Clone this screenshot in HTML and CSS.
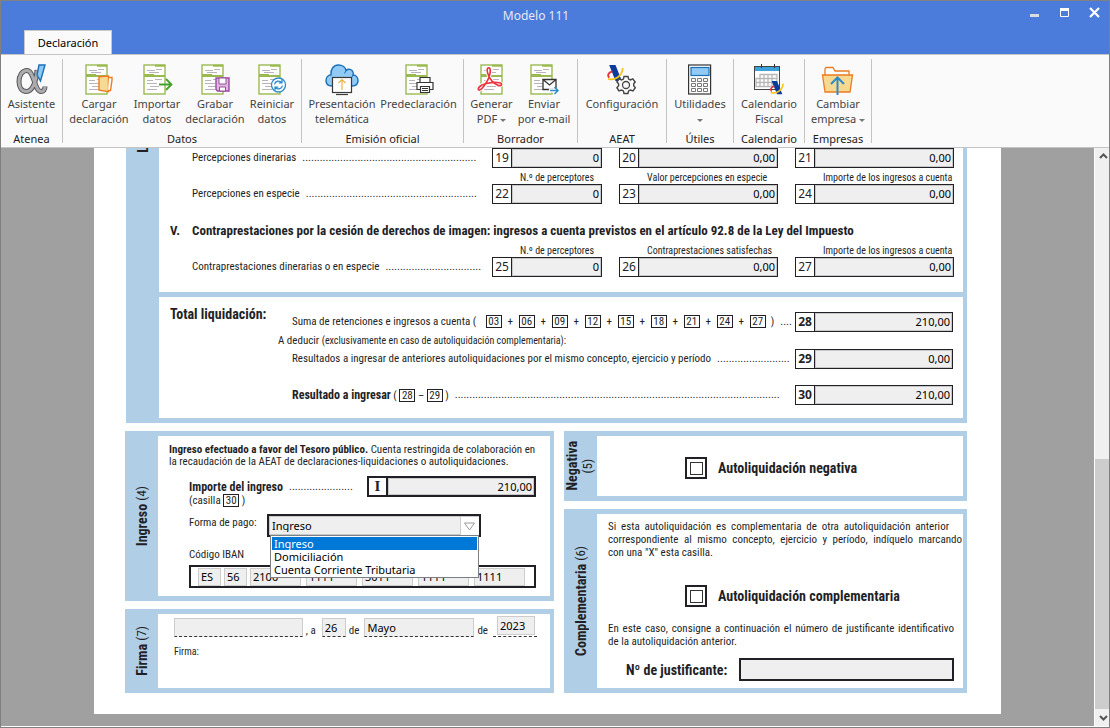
FILE: index.html
```html
<!DOCTYPE html>
<html lang="es">
<head>
<meta charset="utf-8">
<title>Modelo 111</title>
<link rel="stylesheet" href="styles.css">
</head>
<body>
<svg class="defs" aria-hidden="true">
  <symbol id="doc" viewBox="0 0 24 32">
    <rect x="1" y="1" width="21" height="29" fill="#fff" stroke="#9aba50" stroke-width="1.4"/>
    <path d="M12 1.700h10M1 11h10M1 12h21" stroke="#9aba50" stroke-width="2"/>
    <path d="M4 6.500h8M13 5.500h6M6 8.500h10M4 16.500h6M12 15.500h7M4 19.500h10M7 22.500h9M4 25.500h10" stroke="#b9b3bb"/>
  </symbol>
  <symbol id="aeat" viewBox="0 0 18 18">
    <path d="M3 1h6l6 15H9z" fill="#0b3c9c"/>
    <path d="M6 7c-4 1-5 4-3 6" fill="none" stroke="#e5303b" stroke-width="1.8"/>
    <path d="M2 14c6 2 13-2 14-10" fill="none" stroke="#f8c51c" stroke-width="1.8"/>
  </symbol>
</svg>

<div class="window">
  <header class="titlebar">
    <h1 class="title">Modelo 111</h1>
    <div class="controls">
      <button class="control" aria-label="Minimizar"><svg width="11" height="11"><path d="M1 8.500h9" stroke="#dcdcdc" stroke-width="3"/></svg></button>
      <button class="control" aria-label="Maximizar"><svg width="11" height="11"><path d="M1.500 2v7.500h8V2" fill="none" stroke="#fff"/><path d="M1 2.500h9" stroke="#fff" stroke-width="3"/></svg></button>
      <button class="control" aria-label="Cerrar"><svg width="11" height="11"><path d="M1 1l9 9M10 1l-9 9" stroke="#fff" stroke-width="2.200"/></svg></button>
    </div>
    <nav class="tabs"><button class="tab">Declaración</button></nav>
  </header>

  <div class="ribbon">
    <section class="group">
      <div class="tools">
        <button class="tool"><svg class="icon" viewBox="0 0 34 32" width="34" height="32"><path d="M22 6C21 19 17 27.500 11.500 27.500 6.500 27.500 4 23 4 17.500S7 6.500 12 6.500C19 6.500 19.500 27.500 26 27.500c2.500 0 4-2 4-5" fill="none" stroke="#58585a" stroke-width="5"/><path d="M22 6.500C21 19 17 27.500 11.500 27.500 6.500 27.500 4 23 4 17.500S7 6.500 12 6.500C19 6.500 19.500 27.500 26 27.500c2.500 0 4-2 4-4.500" fill="none" stroke="#acacae" stroke-width="3"/><path d="M24 1h6l-4.500 16-3.500-6z" fill="#8cc8f2" stroke="#1c6fb5" stroke-width="1.400"/></svg><span>Asistente<br>virtual</span></button>
      </div>
      <h2 class="group-name">Atenea</h2>
    </section>
    <section class="group">
      <div class="tools tools-data">
        <button class="tool"><svg class="icon" viewBox="0 0 34 32" width="34" height="32"><use href="#doc" x="3" y="0" width="24" height="32"/><path d="M17 12.700l9.500-.7v15.600l-9.500-1.400z" fill="#f6da92" stroke="#ea7c22" stroke-width="1.400"/><path d="M27 13.500h3v2.500l-1.500 10.500H26" fill="#fff" stroke="#ea7c22" stroke-width="1.400"/></svg><span>Cargar<br>declaración</span></button>
        <button class="tool"><svg class="icon" viewBox="0 0 34 32" width="34" height="32"><use href="#doc" x="3" y="0" width="24" height="32"/><path d="M19 20.500h12M26 15l5.500 5.500-5.500 5.500" fill="none" stroke="#44a12c" stroke-width="1.800"/></svg><span>Importar<br>datos</span></button>
        <button class="tool"><svg class="icon" viewBox="0 0 34 32" width="34" height="32"><use href="#doc" x="3" y="0" width="24" height="32"/><path d="M18 14h13v13H19.500L18 25.500z" fill="#ddb9df" stroke="#9c4a9f" stroke-width="1.400"/><path d="M21 14h7v6h-7zM21.500 23h6v4h-6z" fill="#fff" stroke="#9c4a9f"/></svg><span>Grabar<br>declaración</span></button>
        <button class="tool"><svg class="icon" viewBox="0 0 34 32" width="34" height="32"><use href="#doc" x="3" y="0" width="24" height="32"/><circle cx="23.500" cy="21" r="7" fill="#fff" stroke="#2c8cc9" stroke-width="1.300"/><path d="M19.500 20.500c.5-3.500 5-4.500 7-2M27.500 21.500c-.5 3.500-5 4.500-7 2M27 15.500v3.300h-3.300M20 26.500v-3.300h3.300" fill="none" stroke="#2c8cc9" stroke-width="1.300"/></svg><span>Reiniciar<br>datos</span></button>
      </div>
      <h2 class="group-name">Datos</h2>
    </section>
    <section class="group">
      <div class="tools tools-filing">
        <button class="tool"><svg class="icon" viewBox="0 0 34 32" width="34" height="32"><path d="M7 22C3 22 1 19.500 1 16.500S3 11 6 10.700C5.500 5 8.500 1 13.500 1c4 0 7 2.500 7.600 5.500C23 4.500 27 5 28 8c.4 1 .4 2 0 3 3 0 5 2.500 5 5.500s-2 5.500-6 5.500z" fill="#90caf5" stroke="#1c6fb5" stroke-width="1.400"/><path d="M21 6.500l-1.500 3M28 11c-.5 2-2 3-3.500 3.200" fill="none" stroke="#1c6fb5"/><rect x="7.500" y="13.500" width="19" height="15" fill="#fff" stroke="#3a3a3a" stroke-width="1.200"/><path d="M11 30.500h12" stroke="#3a3a3a" stroke-width="1.200"/><path d="M17 26V15.500M13.500 19l3.500-3.500 3.500 3.500" fill="none" stroke="#eeb044" stroke-width="1.200"/></svg><span>Presentación<br>telemática</span></button>
        <button class="tool"><svg class="icon" viewBox="0 0 34 32" width="34" height="32"><use href="#doc" x="3" y="0" width="24" height="32"/><path d="M18 18.500v-5h10v5M18 25.500h-3v-7h16v7h-3" fill="#fff" stroke="#333" stroke-width="1.200"/><path d="M18.500 22.500h9v6h-9z" fill="#fff" stroke="#333" stroke-width="1.200"/><path d="M20 24.500h6M20 26.500h6" stroke="#333"/></svg><span>Predeclaración</span></button>
      </div>
      <h2 class="group-name">Emisión oficial</h2>
    </section>
    <section class="group">
      <div class="tools tools-draft">
        <button class="tool"><svg class="icon" viewBox="0 0 34 32" width="34" height="32"><use href="#doc" x="5" y="0" width="24" height="32"/><path d="M13 4c3-1.500 3 5 .5 10.500S6 26.500 4 26s0-5 7.500-6.500S27 18 26.500 20.500 21 21.500 17 17 11 5.500 13 4z" fill="none" stroke="#fff" stroke-width="3.500"/><path d="M13 4c3-1.500 3 5 .5 10.500S6 26.500 4 26s0-5 7.500-6.500S27 18 26.500 20.500 21 21.500 17 17 11 5.500 13 4z" fill="none" stroke="#ee3440" stroke-width="1.700"/></svg><span>Generar<br>PDF <i class="caret"></i></span></button>
        <button class="tool"><svg class="icon" viewBox="0 0 34 32" width="34" height="32"><use href="#doc" x="3" y="0" width="24" height="32"/><path d="M16 15.500h13v10H16z" fill="#fff" stroke="#333" stroke-width="1.300"/><path d="M16 15.500l6.500 5.500 6.500-5.500" fill="none" stroke="#333" stroke-width="1.300"/><path d="M22 26.500h9" stroke="#fff" stroke-width="4"/><path d="M23 26.500h8M27.500 23l3.500 3.500-3.500 3.500" fill="none" stroke="#2c8cc9" stroke-width="1.500"/></svg><span>Enviar<br>por e-mail</span></button>
      </div>
      <h2 class="group-name">Borrador</h2>
    </section>
    <section class="group group-wide">
      <div class="tools">
        <button class="tool"><svg class="icon" viewBox="0 0 34 32" width="34" height="32"><use href="#aeat" x="1" y="0" width="19" height="19"/><path d="M19 12.500h4l.6 2.600 1.800.9 2.400-1.200 2.400 3.200-1.500 1.800v2l1.600 1.900-2.300 3.300-2.500-1-1.900 1-.6 2.500h-4l-.6-2.500-1.900-1-2.500 1-2.100-3.300 1.700-1.900v-2l-1.700-1.800 2.200-3.200 2.500 1.200 1.800-.9z" fill="#fafafa" stroke="#444" stroke-width="1.400"/><circle cx="21" cy="21" r="3.500" fill="#fafafa" stroke="#444" stroke-width="1.300"/></svg><span>Configuración</span></button>
      </div>
      <h2 class="group-name">AEAT</h2>
    </section>
    <section class="group group-small">
      <div class="tools">
        <button class="tool"><svg class="icon" viewBox="0 0 34 32" width="34" height="32"><rect x="5.600" y="1" width="22" height="29" fill="#fff" stroke="#333" stroke-width="1.200"/><rect x="8" y="3.500" width="18" height="8" fill="#90caf5" stroke="#1c6fb5" stroke-width="1.200"/><path d="M8.500 14.500h4v3h-4zM14.500 14.500h4v3h-4zM20.500 14.500h4v3h-4zM8.500 19.500h4v3h-4zM14.500 19.500h4v3h-4zM20.500 19.500h4v3h-4zM8.500 24.500h4v3h-4zM14.500 24.500h4v3h-4zM20.500 24.500h4v3h-4z" fill="#fff" stroke="#777"/></svg><span>Utilidades<br><i class="caret"></i></span></button>
      </div>
      <h2 class="group-name">Útiles</h2>
    </section>
    <section class="group group-medium">
      <div class="tools">
        <button class="tool"><svg class="icon" viewBox="0 0 34 32" width="34" height="32"><rect x="2.500" y="2.500" width="25" height="23" fill="#fff" stroke="#444"/><rect x="3" y="3" width="24" height="4" fill="#3ba1da"/><path d="M9.500 0v4M22.500 0v4" stroke="#333"/><path d="M8 10.500h17v12H4v-8h4zM8 10v13M12 10v13M16 10v13M20 10v13M4 14.500h21M4 18.500h21" fill="none" stroke="#b8b8b8" stroke-width="1.300"/><use href="#aeat" x="17" y="16" width="16" height="16"/></svg><span>Calendario<br>Fiscal</span></button>
      </div>
      <h2 class="group-name">Calendario</h2>
    </section>
    <section class="group group-small">
      <div class="tools">
        <button class="tool"><svg class="icon" viewBox="0 0 34 32" width="34" height="32"><path d="M4 13V5l1-1.500h7L14 7h14v6" fill="#fff" stroke="#ea7c22" stroke-width="1.300"/><path d="M1.500 11h30l-2.500 17H4z" fill="#f6da92" stroke="#ea7c22" stroke-width="1.300"/><path d="M16.500 31V14M10 20l6.500-6.500L23 20" fill="none" stroke="#2c8cc9" stroke-width="2"/></svg><span>Cambiar<br>empresa <i class="caret"></i></span></button>
      </div>
      <h2 class="group-name">Empresas</h2>
    </section>
  </div>

  <div class="viewer">
    <main class="canvas">
      <form class="sheet">
        <section class="panel panel-main">
          <div class="side"><span class="side-text side-above">Liquidación <small>(3)</small></span></div>
          <div class="panel-parts">
            <div class="part part-income">
              <div class="entry">
                <div class="leader"><span>Percepciones dinerarias</span><span class="dots">............................................................</span></div>
                <label class="field"><span class="code">19</span><input class="value" value="0"></label>
                <label class="field"><span class="code">20</span><input class="value" value="0,00"></label>
                <label class="field"><span class="code">21</span><input class="value" value="0,00"></label>
              </div>
              <div class="entry captions"><span></span><span>N.º de perceptores</span><span>Valor percepciones en especie</span><span>Importe de los ingresos a cuenta</span></div>
              <div class="entry">
                <div class="leader"><span>Percepciones en especie</span><span class="dots">...........................................................</span></div>
                <label class="field"><span class="code">22</span><input class="value" value="0"></label>
                <label class="field"><span class="code">23</span><input class="value" value="0,00"></label>
                <label class="field"><span class="code">24</span><input class="value" value="0,00"></label>
              </div>
              <h3 class="heading"><span class="numeral">V.</span>Contraprestaciones por la cesión de derechos de imagen: ingresos a cuenta previstos en el artículo 92.8 de la Ley del Impuesto</h3>
              <div class="entry captions"><span></span><span>N.º de perceptores</span><span>Contraprestaciones satisfechas</span><span>Importe de los ingresos a cuenta</span></div>
              <div class="entry">
                <div class="leader"><span>Contraprestaciones dinerarias o en especie</span><span class="dots">.................................</span></div>
                <label class="field"><span class="code">25</span><input class="value" value="0"></label>
                <label class="field"><span class="code">26</span><input class="value" value="0,00"></label>
                <label class="field"><span class="code">27</span><input class="value" value="0,00"></label>
              </div>
            </div>
            <div class="part part-total">
              <h3 class="total-name">Total liquidación:</h3>
              <div class="totals">
                <div class="total-row">
                  <div class="leader"><span class="sum">Suma de retenciones e ingresos a cuenta ( <b class="ref">03</b><i>+</i><b class="ref">06</b><i>+</i><b class="ref">09</b><i>+</i><b class="ref">12</b><i>+</i><b class="ref">15</b><i>+</i><b class="ref">18</b><i>+</i><b class="ref">21</b><i>+</i><b class="ref">24</b><i>+</i><b class="ref">27</b> &nbsp;)</span><span class="dots">....</span></div>
                  <label class="field"><span class="code strong">28</span><input class="value" value="210,00"></label>
                </div>
                <p class="deduct">A deducir <small>(exclusivamente en caso de autoliquidación complementaria):</small></p>
                <div class="total-row">
                  <div class="leader"><span>Resultados a ingresar de anteriores autoliquidaciones por el mismo concepto, ejercicio y período</span><span class="dots">.........................</span></div>
                  <label class="field"><span class="code strong">29</span><input class="value" value="0,00"></label>
                </div>
                <div class="total-row total-last">
                  <div class="leader"><span><strong>Resultado a ingresar</strong> ( <b class="ref">28</b> – <b class="ref">29</b> )</span><span class="dots">................................................................................................................</span></div>
                  <label class="field"><span class="code strong">30</span><input class="value" value="210,00"></label>
                </div>
              </div>
            </div>
          </div>
        </section>

        <div class="columns">
          <div class="stack">
            <section class="panel panel-payment">
              <div class="side"><span class="side-text">Ingreso <small>(4)</small></span></div>
              <div class="part part-payment">
                <p class="note"><strong>Ingreso efectuado a favor del Tesoro público.</strong> Cuenta restringida de colaboración en la recaudación de la AEAT de declaraciones-liquidaciones o autoliquidaciones.</p>
                <div class="payment-rows">
                  <div class="amount">
                    <div class="leader"><strong>Importe del ingreso</strong><span class="dots">......................</span></div>
                    <label class="field field-thick"><span class="code initial">I</span><input class="value" value="210,00"></label>
                  </div>
                  <p class="box-ref">(casilla <b class="ref">30</b> )</p>
                  <div class="method">
                    <label for="method">Forma de pago:</label>
                    <div class="combo">
                      <select id="method" class="select"><option>Ingreso</option><option>Domiciliación</option><option>Cuenta Corriente Tributaria</option></select>
                      <svg class="combo-arrow" width="19" height="18" viewBox="0 0 19 18"><path d="M.5 0v18" stroke="#ccc"/><path d="M4.500 6h10l-5 7z" fill="#fff" stroke="#999"/></svg>
                      <ul class="options"><li class="option option-on">Ingreso</li><li class="option">Domiciliación</li><li class="option">Cuenta Corriente Tributaria</li></ul>
                    </div>
                  </div>
                  <p class="iban-name">Código IBAN</p>
                  <div class="iban">
                    <input class="cell cell-xs" value="ES" aria-label="País"><input class="cell cell-xs" value="56" aria-label="Control"><input class="cell" value="2100" aria-label="Entidad"><input class="cell" value="1111" aria-label="Oficina"><input class="cell" value="3011" aria-label="Cuenta 1"><input class="cell" value="1111" aria-label="Cuenta 2"><input class="cell" value="1111" aria-label="Cuenta 3">
                  </div>
                </div>
              </div>
            </section>
            <section class="panel panel-sign">
              <div class="side"><span class="side-text">Firma <small>(7)</small></span></div>
              <div class="part part-sign">
                <div class="date">
                  <input class="cell place" aria-label="Lugar"><span>, a</span>
                  <input class="cell day" value="26" aria-label="Día"><span>de</span>
                  <input class="cell month" value="Mayo" aria-label="Mes"><span>de</span>
                  <span class="year-line"><input class="cell year" value="2023" aria-label="Año"></span>
                </div>
                <p class="sign">Firma:</p>
              </div>
            </section>
          </div>
          <div class="stack">
            <section class="panel panel-negative">
              <div class="side"><span class="side-text">Negativa<br><small>(5)</small></span></div>
              <div class="part part-negative">
                <label class="check"><span class="check-frame"><input class="check-box" type="checkbox"></span>Autoliquidación negativa</label>
              </div>
            </section>
            <section class="panel panel-extra">
              <div class="side"><span class="side-text">Complementaria <small>(6)</small></span></div>
              <div class="part part-extra">
                <p class="text"><span class="line line-short">Si esta autoliquidación es complementaria de otra autoliquidación anterior</span> <span class="line">correspondiente al mismo concepto, ejercicio y período, indíquelo marcando</span> con una "X" esta casilla.</p>
                <label class="check"><span class="check-frame"><input class="check-box" type="checkbox"></span>Autoliquidación complementaria</label>
                <p class="text"><span class="line line-mid">En este caso, consigne a continuación el número de justificante identificativo</span> de la autoliquidación anterior.</p>
                <div class="proof"><label for="proof">Nº de justificante:</label><input id="proof" class="proof-value"></div>
              </div>
            </section>
          </div>
        </div>
      </form>
    </main>
    <div class="scroll" aria-hidden="true">
      <svg class="scroll-end" width="16" height="17" viewBox="0 0 16 17"><path d="M5 10l3.500-3.500L12 10" fill="none" stroke="#555" stroke-width="2"/></svg>
      <div class="scroll-track"><div class="scroll-thumb"></div></div>
      <svg class="scroll-end" width="16" height="17" viewBox="0 0 16 17"><path d="M5 7l3.500 3.500L12 7" fill="none" stroke="#555" stroke-width="2"/></svg>
    </div>
  </div>
</div>
</body>
</html>
```

FILE: styles.css
```css
* { box-sizing: border-box; }
body, h1, h2, h3, p, ul { margin: 0; padding: 0; }
body {
  --ui: "Noto Sans", "Open Sans", sans-serif;
  --print: "Roboto Condensed", Roboto, sans-serif;
  --ink: #231f26;
  --blue: #b0cfe6;
  font: 12px/15px var(--ui);
  color: #000;
}
button, input, select { font: inherit; color: inherit; margin: 0; border-radius: 0; }
button { background: none; border: 0; padding: 0; }
.defs { position: absolute; width: 0; height: 0; }

.window {
  display: flex;
  flex-direction: column;
  height: 100vh;
  border: 1px solid #808080;
  background: #fff;
}

/* Title bar */
.titlebar {
  display: grid;
  grid-template-columns: 80px 1fr 80px;
  grid-template-rows: 29px 24px;
  background: #4b7bdb;
}
.title { grid-column: 2; text-align: center; font-size: 12px; line-height: 30px; font-weight: 400; color: #e4e9f5; padding-right: 38px; }
.controls { display: flex; justify-content: flex-end; gap: 19px; padding: 6px 9px 0 0; margin-left: -20px; }
.control { display: flex; width: 11px; height: 11px; }
.tabs { grid-row: 2; grid-column: 1 / -1; padding-left: 23px; display: flex; }
.tab { width: 88px; background: #fafafa; border: 1px solid #c8c8c8; border-bottom: 0; font-size: 11px; }

/* Ribbon */
.ribbon {
  display: flex;
  padding: 4px 0;
  background: #fafafa;
  border-top: 1px solid #c4c4c4;
  border-bottom: 1px solid #c4c4c4;
}
.group { display: flex; flex-direction: column; min-width: 62px; padding-top: 5px; border-right: 1px solid #c4c4c4; }
.group-small { width: 67px; }
.group-medium { width: 71px; }
.group-wide { width: 89px; }
.tools { display: grid; flex: 1; justify-content: center; }
.tools-data { grid-template-columns: 62px 54px 62px 52px; padding: 0 3px 0 5px; }
.tools-filing { grid-template-columns: 72px 81px; padding: 0 4px; }
.tools-draft { grid-template-columns: 47px 58px; padding: 0 4px; }
.tool { display: flex; flex-direction: column; align-items: center; color: #444; font-size: 11px; white-space: nowrap; }
.icon { flex: none; }
.group-name { height: 17px; font-size: 11px; line-height: 25px; font-weight: 400; text-align: center; color: #222; }
.caret { display: inline-block; vertical-align: middle; border: 3px solid transparent; border-top-color: #777; border-bottom: 0; }

/* Document viewer */
.viewer { flex: 1; min-height: 0; display: flex; border-bottom: 1px solid #fff; }
.canvas { flex: 1; overflow: hidden; background: #a0a0a0; }
.scroll { display: flex; flex-direction: column; width: 15px; border-left: 1px solid #fff; background: #f0f0f0; }
.scroll-end { flex: none; }
.scroll-track { flex: 1; display: flex; align-items: flex-end; }
.scroll-thumb { width: 100%; height: 46%; background: #cdcdcd; }

.sheet {
  max-width: 907px;
  margin: 0 auto;
  padding: 0 34px 21px 31px;
  background: #fff;
  color: var(--ink);
  font: 11px/14px var(--print);
}

/* Panels */
.panel { display: flex; background: var(--blue); padding: 5px 4px 5px 0; }
.panel-main { padding-top: 0; margin-left: 1px; }
.panel-parts { flex: 1; display: flex; flex-direction: column; gap: 5px; }
.side { position: relative; width: 33px; flex: none; display: flex; align-items: center; justify-content: center; }
.side-text { writing-mode: vertical-rl; transform: rotate(180deg); white-space: nowrap; text-align: center; font-size: 14px; line-height: 15px; font-weight: 700; }
.side-text small { font-size: 13px; font-weight: 400; }
.side-above { position: absolute; bottom: calc(100% - 5px); }
.part { flex: 1; background: #fff; min-width: 0; }

/* Numbered fields */
.field { display: flex; height: 20px; border: 1px solid var(--ink); background: #fff; font-family: var(--ui); }
.field-thick { height: 21px; border-width: 2px; }
.code { width: 19px; flex: none; text-align: center; line-height: 18px; font-size: 12px; border-right: 1px solid var(--ink); }
.strong { font-weight: 700; }
.initial { border-right-width: 2px; font: 700 15px/17px "Liberation Serif", serif; }
.value { flex: 1; min-width: 0; width: 0; border: 1px solid #c8c8c8; background: #efefef; padding: 0 1px; font-size: 11px; color: #000; text-align: right; }
.leader { display: flex; gap: 6px; min-width: 0; white-space: nowrap; align-items: center; }
.leader strong { font-size: 12px; }
.dots { flex: 1; min-width: 0; }

/* Income entries */
.part-income { padding: 0 9px 15px 33px; }
.entry { display: grid; grid-template-columns: 1fr 110px 159px 159px; column-gap: 17px; }
.entry .leader { margin-right: -10px; }
.captions { font-size: 10px; line-height: 12px; margin: 4px 0 0; }
.captions span { white-space: nowrap; padding-left: 28px; }
.heading { display: flex; margin: 20px 0 7px -22px; font-size: 13px; line-height: 14px; white-space: nowrap; }
.numeral { width: 22px; }

/* Totals */
.part-total { display: grid; grid-template-columns: 108px 1fr; padding: 9px 10px 13px 11px; }
.total-name { font-size: 14px; line-height: 16px; white-space: nowrap; }
.totals { padding-top: 6px; }
.total-row { display: grid; grid-template-columns: 1fr 158px; padding-left: 14px; }
.total-last { margin-top: 16px; }
.total-row .leader { padding-right: 2px; }
.ref { display: inline-block; width: 16px; height: 13px; border: 1px solid var(--ink); font-weight: 400; font-size: 11px; line-height: 12px; text-align: center; }
.sum i { display: inline-block; width: 17px; text-align: center; font-style: normal; }
.sum .ref:first-of-type { margin-left: 7px; }
.deduct { margin: 2px 0 1px; }
.deduct small { font-size: 10px; }

/* Lower columns */
.columns { display: grid; grid-template-columns: 429fr 403fr; gap: 10px; margin-top: 8px; }
.stack { display: flex; flex-direction: column; gap: 8px; min-width: 0; }

.part-payment { padding: 8px 8px 8px 11px; }
.note { font-size: 11px; line-height: 12px; }
.payment-rows { padding: 8px 6px 0 20px; }
.amount { display: grid; grid-template-columns: 1fr 169px; gap: 10px; }
.box-ref { line-height: 14px; margin-top: -3px; }
.method { display: grid; grid-template-columns: 71px 214px; gap: 7px; margin-top: 6px; }
.method label { line-height: 18px; }
.combo { position: relative; border: 2px solid var(--ink); font: 11px/13px var(--ui); color: #000; }
.select { display: block; appearance: none; width: 100%; height: 19px; border: 1px solid #c8c8c8; background: #efefef; padding: 0 2px; outline: 0; }
.combo-arrow { position: absolute; right: 0; top: 1px; background: #fff; pointer-events: none; }
.options { position: absolute; z-index: 1; left: 1px; right: 0; top: 19px; list-style: none; background: #fff; border: 1px solid #7a7f88; padding: 1px; }
.option { padding-left: 2px; }
.option-on { background: #0078d7; color: #fff; }
.iban-name { margin: 11px 0 3px; }
.iban { display: flex; align-items: center; gap: 2px; height: 23px; border: 2px solid var(--ink); padding: 0 6px 0 7px; }
.cell { flex: 1; min-width: 0; width: 0; height: 19px; border: 1px solid #ccc; background: #efefef; padding: 0 2px; font: 11px/13px var(--ui); color: #000; }
.iban .cell { margin-right: 3px; height: 18px; }
.iban .cell-xs { flex: none; width: 23px; margin-right: 1px; }

.part-sign { padding: 2px 13px 30px 16px; }
.date { display: flex; align-items: flex-end; gap: 3px; line-height: 12px; }
.date .cell { border-bottom: 1px dashed #333; }
.place.cell { flex: 130; }
.day.cell { flex: none; width: 24px; margin-left: 3px; }
.month.cell { flex: 110; margin-left: 2px; }
.year-line { width: 44px; margin-left: 2px; padding: 0 2px 1px 4px; border-bottom: 1px dashed #333; display: flex; }
.date .year { border-bottom: 1px solid #ccc; }
.sign { font-size: 10px; line-height: 12px; margin-top: 9px; }

.part-negative { padding: 21px 0 17px 88px; }
.check { display: flex; align-items: center; gap: 11px; font-weight: 700; font-size: 14px; }
.check-frame { display: flex; align-items: center; justify-content: center; width: 22px; height: 22px; border: 2px solid var(--ink); }
.check-box { appearance: none; width: 13px; height: 13px; margin: 0; border: 1px solid #333; background: #fff; }
.part-extra { padding: 6px 1px 7px 11px; }
.text { line-height: 13px; }
.line { display: block; text-align: justify; text-align-last: justify; white-space: nowrap; }
.line-short { margin-right: 13px; }
.line-mid { margin-right: 8px; }
.part-extra .check { margin: 26px 0 15px 77px; }
.proof { display: flex; align-items: center; gap: 12px; margin: 10px 8px 0 18px; font-weight: 700; font-size: 14px; white-space: nowrap; }
.proof-value { flex: 1; min-width: 0; height: 23px; border: 2px solid var(--ink); background: #efefef; }
```
